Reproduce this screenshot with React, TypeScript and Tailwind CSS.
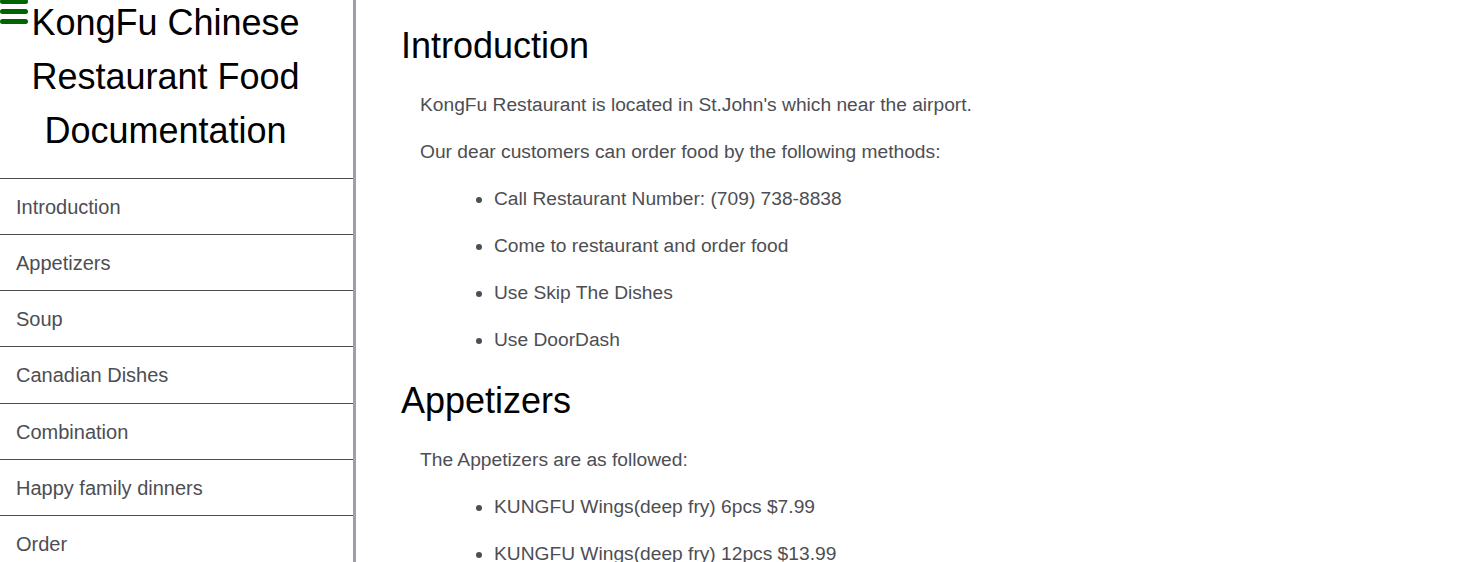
const NAV = [
  "Introduction",
  "Appetizers",
  "Soup",
  "Canadian Dishes",
  "Combination",
  "Happy family dinners",
  "Order",
];

const Section = ({ title, children }: { title: string; children: React.ReactNode }) => (
  <section className="mb-[24px]">
    <h1 className="text-[36px] leading-[46px] text-black">{title}</h1>
    <div className="mt-[21px] ml-[19px] flex flex-col gap-[18px] text-[19.2px] leading-[29px] text-[#4d4e53]">
      {children}
    </div>
  </section>
);

const List = ({ items }: { items: string[] }) => (
  <ul className="list-disc pl-[74px] flex flex-col gap-[18px] marker:text-[#4d4e53]">
    {items.map((item) => (
      <li key={item}>{item}</li>
    ))}
  </ul>
);

export default function App() {
  return (
    <div className="flex h-screen overflow-hidden bg-white font-['Liberation_Sans',Arial,sans-serif]">
      <nav className="relative w-[356px] shrink-0 border-r-[3px] border-[#9ba1a6] h-full overflow-hidden">
        <div className="absolute left-0 top-[-1px] flex flex-col gap-[5px]" aria-hidden>
          <span className="block h-[5px] w-[28px] rounded-full bg-[#006400]" />
          <span className="block h-[5px] w-[28px] rounded-full bg-[#006400]" />
          <span className="block h-[5px] w-[28px] rounded-full bg-[#006400]" />
        </div>
        <header className="-mt-[4px] pb-[20px] pr-[22px] text-center text-[36px] leading-[54px] text-black">
          KongFu Chinese Restaurant Food Documentation
        </header>
        <ul>
          {NAV.map((item, i) => (
            <li
              key={item}
              className={
                i === 3
                  ? "flex h-[57px] items-center border-t border-[#4d4e53] pl-[16px] text-[20px] text-[#4d4e53]"
                  : "flex h-[56px] items-center border-t border-[#4d4e53] pl-[16px] text-[20px] text-[#4d4e53]"
              }
            >
              {item}
            </li>
          ))}
        </ul>
      </nav>

      <main className="flex-1 overflow-hidden pl-[45px] pt-[23px]">
        <Section title="Introduction">
          <p>KongFu Restaurant is located in St.John's which near the airport.</p>
          <p>Our dear customers can order food by the following methods:</p>
          <List
            items={[
              "Call Restaurant Number: (709) 738-8838",
              "Come to restaurant and order food",
              "Use Skip The Dishes",
              "Use DoorDash",
            ]}
          />
        </Section>
        <Section title="Appetizers">
          <p>The Appetizers are as followed:</p>
          <List
            items={[
              "KUNGFU Wings(deep fry) 6pcs $7.99",
              "KUNGFU Wings(deep fry) 12pcs $13.99",
            ]}
          />
        </Section>
      </main>
    </div>
  );
}
